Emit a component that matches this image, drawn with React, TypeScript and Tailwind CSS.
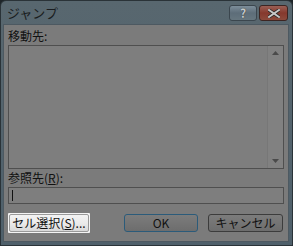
import React from 'react';

const FONT = '"Noto Sans CJK JP", "Liberation Sans", sans-serif';

function TitleButton({ kind }: { kind: 'help' | 'close' }) {
  const isClose = kind === 'close';
  return (
    <div
      className={`h-[16px] flex items-center justify-center rounded-[3px] border ${
        isClose
          ? 'w-[29px] border-[#3d2522] bg-gradient-to-b from-[#9a5f55] via-[#86392d] to-[#8c4a3c]'
          : 'w-[28px] border-[#3b464e] bg-gradient-to-b from-[#7d8e9a] via-[#5d6d79] to-[#66767f]'
      }`}
    >
      {isClose ? (
        <svg width="12" height="9" viewBox="0 0 12 9">
          <path d="M1 1 L11 8 M11 1 L1 8" stroke="#2a2a2a" strokeWidth="3.4" strokeLinecap="square" />
          <path d="M1 1 L11 8 M11 1 L1 8" stroke="#c9c9c9" strokeWidth="1.8" strokeLinecap="square" />
        </svg>
      ) : (
        <span className="text-[12px] font-bold leading-none text-[#c4c8cb] [text-shadow:0_0_1px_#222]">?</span>
      )}
    </div>
  );
}

export default function App() {
  return (
    <div className="w-[293px] h-[246px] bg-[#1e2529] overflow-hidden" style={{ fontFamily: FONT }}>
      <div className="w-full h-full rounded-t-[6px] border border-[#2a3338] bg-gradient-to-b from-[#58676f] to-[#4f606b] flex flex-col">
        {/* title bar */}
        <div className="h-[23px] shrink-0 flex items-start pl-[6px] pr-[4px] pt-[4px]">
          <span className="text-[13px] leading-[16px] text-[#1a1d20]">ジャンプ</span>
          <div className="ml-auto flex gap-[2px]">
            <TitleButton kind="help" />
            <TitleButton kind="close" />
          </div>
        </div>

        {/* client area */}
        <div className="flex-1 ml-[2px] mr-[3px] mb-[3px] bg-[#7b7b7b] border border-[#4d5961] flex flex-col px-[4px] text-[12px] text-[#111]">
          <div className="h-[20px] pt-[3px] leading-[15px]">移動先:</div>

          <div className="h-[124px] border border-[#4f4f4f] bg-[#7e7e7e] flex justify-end">
            <div className="w-[16px] bg-[#818181] border-l border-[#777] flex flex-col items-center justify-between py-[5px]">
              <svg width="7" height="4" viewBox="0 0 7 4"><path d="M3.5 0 L7 4 L0 4 Z" fill="#4a4a4a" /></svg>
              <svg width="7" height="4" viewBox="0 0 7 4"><path d="M0 0 L7 0 L3.5 4 Z" fill="#4a4a4a" /></svg>
            </div>
          </div>

          <div className="h-[18px] pt-[1px] leading-[15px]">
            参照先(<span className="underline">R</span>):
          </div>

          <div className="h-[17px] border border-[#4f4f4f] bg-[#7e7e7e] flex items-center pl-[3px]">
            <div className="w-[1px] h-[11px] bg-[#111]" />
          </div>

          <div className="mt-[10px] flex items-start">
            <div className="mt-[-1px] p-[1px] bg-[#f4f4f4] rounded-[1px]">
              <div className="w-[80px] h-[18px] rounded-[2px] border border-[#9a9a9a] bg-gradient-to-b from-[#f3f3f3] via-[#ebebeb] to-[#d9d9d9] flex items-center justify-center leading-none text-[12px] text-[#111]">
                セル選択(<span className="underline">S</span>)...
              </div>
            </div>
            <div className="ml-[34px] w-[74px] h-[18px] rounded-[3px] border border-[#2b5b7a] bg-gradient-to-b from-[#7c7c7c] to-[#6d6d6d] flex items-center justify-center leading-none">
              OK
            </div>
            <div className="ml-[10px] w-[75px] h-[18px] rounded-[3px] border border-[#3c3c3c] bg-gradient-to-b from-[#7c7c7c] to-[#6d6d6d] flex items-center justify-center leading-none">
              キャンセル
            </div>
          </div>
        </div>
      </div>
    </div>
  );
}
